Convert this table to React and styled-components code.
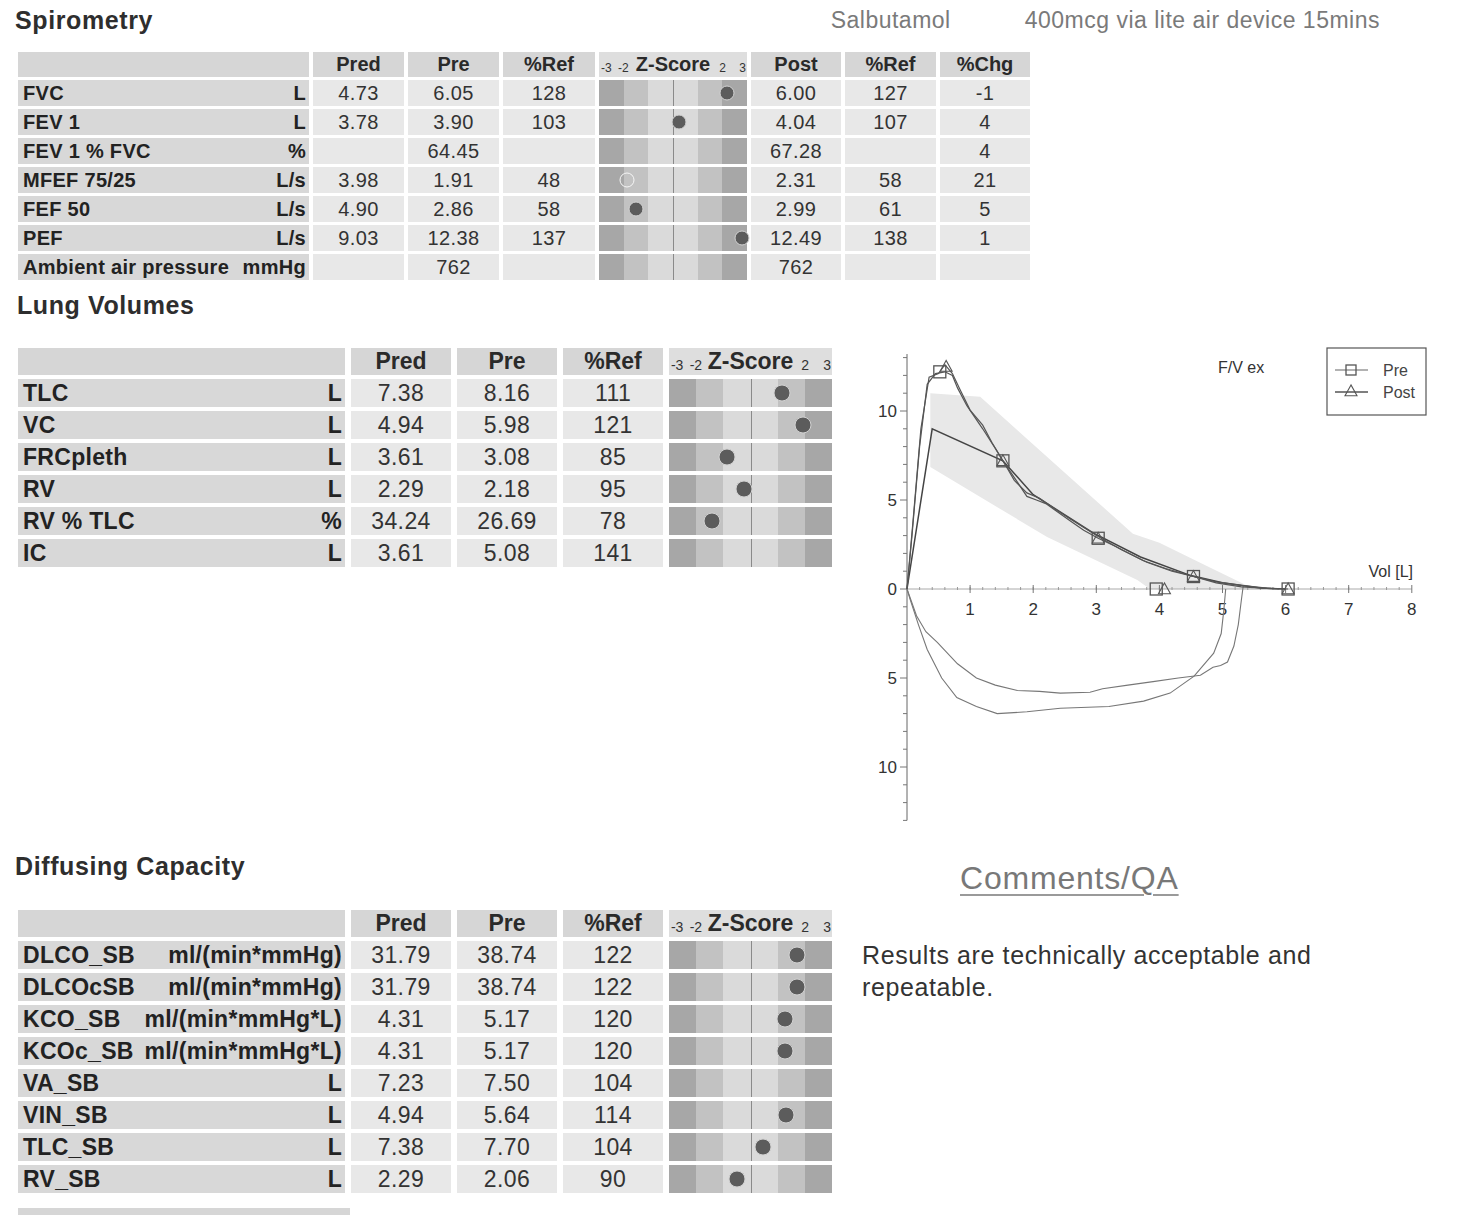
import React from 'react';
import styled, { createGlobalStyle } from 'styled-components';

const GlobalStyle = createGlobalStyle`
  html, body {
    margin: 0;
    padding: 0;
    background: #fff;
  }
  body {
    font-family: "Liberation Sans", Arial, sans-serif;
    color: #2a2a2a;
  }
`;

const Page = styled.div`
  width: 1484px;
  padding: 6px 0 0 15px;
  box-sizing: border-box;
  overflow: hidden;
`;

const TopBar = styled.header`
  display: flex;
  justify-content: space-between;
  align-items: center;
  width: 1365px;
  height: 28px;
`;

const Title = styled.h2`
  margin: ${p => p.$mt || 0}px 0 0 ${p => p.$ml || 0}px;
  font-size: 25px;
  line-height: 28px;
  font-weight: bold;
  letter-spacing: 0.6px;
  color: #2e2e2e;
`;

const Meds = styled.div`
  display: flex;
  gap: 74px;
  font-size: 23px;
  letter-spacing: 0.5px;
  color: #7a7a7a;
`;

const Table = styled.div`
  display: grid;
  grid-template-columns: ${p => p.$cols};
  grid-template-rows: ${p => p.$headH}px;
  grid-auto-rows: ${p => p.$rowH}px;
  column-gap: ${p => p.$colGap}px;
  row-gap: ${p => p.$rowGap}px;
  margin: ${p => p.$mt}px 0 0 3px;
  width: max-content;
  font-size: ${p => p.$fs}px;
`;

const HeadCell = styled.div`
  display: flex;
  align-items: center;
  justify-content: center;
  background: #d6d6d6;
  font-weight: bold;
  color: #2a2a2a;
`;

const LabelCell = styled.div`
  display: flex;
  align-items: center;
  justify-content: space-between;
  padding: 0 3px 0 5px;
  background: #d8d8d8;
  font-weight: bold;
  letter-spacing: 0.3px;
  color: #222;
  white-space: nowrap;
`;

const ValueCell = styled.div`
  display: flex;
  align-items: center;
  justify-content: center;
  background: #e8e8e8;
  letter-spacing: 0.4px;
  color: #333;
`;

const ZCell = styled.div`
  position: relative;
  background: linear-gradient(
    to right,
    #a7a7a7 0 16.66%,
    #c2c2c2 16.66% 33.33%,
    #dadada 33.33% 66.66%,
    #c2c2c2 66.66% 83.33%,
    #a7a7a7 83.33% 100%
  );

  &::after {
    content: '';
    position: absolute;
    left: 50%;
    top: 0;
    bottom: 0;
    width: 1px;
    background: #8a8a8a;
  }
`;

const Dot = styled.span`
  position: absolute;
  top: 50%;
  z-index: 1;
  width: ${p => p.$size}px;
  height: ${p => p.$size}px;
  border-radius: 50%;
  box-sizing: border-box;
  transform: translate(-50%, -50%);
  background: ${p => (p.$hollow ? 'transparent' : '#5c5c5c')};
  border: 1.5px solid ${p => (p.$hollow ? '#f6f6f6' : '#d2d2d2')};
`;

const ZHead = styled.div`
  position: relative;
  display: flex;
  align-items: center;
  justify-content: center;
  background: #dedede;
  font-weight: bold;
  color: #2a2a2a;
`;

const ZTitle = styled.span`
  position: relative;
  z-index: 1;
`;

const ZTick = styled.span`
  position: absolute;
  bottom: 2px;
  transform: translateX(-50%);
  font-size: ${p => p.$fs}px;
  font-weight: normal;
  color: #333;
`;

const Lower = styled.div`
  display: grid;
  grid-template-columns: 845px 580px;
  row-gap: 21px;
  margin-top: 11px;
`;

const Block = styled.section`
  display: flex;
  flex-direction: column;
  align-items: flex-start;
`;

const ChartSvg = styled.svg`
  display: block;
  font-family: "Liberation Sans", Arial, sans-serif;
`;

const CommentsHead = styled.h3`
  margin: 9px 0 0 100px;
  font-size: 32px;
  line-height: 34px;
  font-weight: normal;
  letter-spacing: 0.8px;
  color: #787878;
  text-decoration: underline;
  text-decoration-color: #9a9a9a;
  text-decoration-thickness: 1.5px;
  text-underline-offset: 5px;
`;

const CommentText = styled.p`
  margin: 44px 0 0 2px;
  width: 470px;
  font-size: 25px;
  line-height: 32px;
  letter-spacing: 0.6px;
  color: #333;
`;

const NextHeader = styled.div`
  width: 332px;
  height: 24px;
  margin: 15px 0 0 3px;
  background: #d6d6d6;
`;

const ticks = [
  { v: '-3', at: 5 },
  { v: '-2', at: 16.5 },
  { v: '2', at: 83.5 },
  { v: '3', at: 97 },
];

const spiroRows = [
  { label: 'FVC', unit: 'L', pred: '4.73', pre: '6.05', ref: '128', z: 2.2, post: '6.00', pref: '127', chg: '-1' },
  { label: 'FEV 1', unit: 'L', pred: '3.78', pre: '3.90', ref: '103', z: 0.24, post: '4.04', pref: '107', chg: '4' },
  { label: 'FEV 1 % FVC', unit: '%', pred: '', pre: '64.45', ref: '', z: null, post: '67.28', pref: '', chg: '4' },
  { label: 'MFEF 75/25', unit: 'L/s', pred: '3.98', pre: '1.91', ref: '48', z: -1.88, hollow: true, post: '2.31', pref: '58', chg: '21' },
  { label: 'FEF 50', unit: 'L/s', pred: '4.90', pre: '2.86', ref: '58', z: -1.5, post: '2.99', pref: '61', chg: '5' },
  { label: 'PEF', unit: 'L/s', pred: '9.03', pre: '12.38', ref: '137', z: 2.78, post: '12.49', pref: '138', chg: '1' },
  { label: 'Ambient air pressure', unit: 'mmHg', pred: '', pre: '762', ref: '', z: null, post: '762', pref: '', chg: '' },
];

const lungRows = [
  { label: 'TLC', unit: 'L', pred: '7.38', pre: '8.16', ref: '111', z: 1.16 },
  { label: 'VC', unit: 'L', pred: '4.94', pre: '5.98', ref: '121', z: 1.93 },
  { label: 'FRCpleth', unit: 'L', pred: '3.61', pre: '3.08', ref: '85', z: -0.86 },
  { label: 'RV', unit: 'L', pred: '2.29', pre: '2.18', ref: '95', z: -0.24 },
  { label: 'RV % TLC', unit: '%', pred: '34.24', pre: '26.69', ref: '78', z: -1.42 },
  { label: 'IC', unit: 'L', pred: '3.61', pre: '5.08', ref: '141', z: null },
];

const diffRows = [
  { label: 'DLCO_SB', unit: 'ml/(min*mmHg)', pred: '31.79', pre: '38.74', ref: '122', z: 1.71 },
  { label: 'DLCOcSB', unit: 'ml/(min*mmHg)', pred: '31.79', pre: '38.74', ref: '122', z: 1.71 },
  { label: 'KCO_SB', unit: 'ml/(min*mmHg*L)', pred: '4.31', pre: '5.17', ref: '120', z: 1.27 },
  { label: 'KCOc_SB', unit: 'ml/(min*mmHg*L)', pred: '4.31', pre: '5.17', ref: '120', z: 1.27 },
  { label: 'VA_SB', unit: 'L', pred: '7.23', pre: '7.50', ref: '104', z: null },
  { label: 'VIN_SB', unit: 'L', pred: '4.94', pre: '5.64', ref: '114', z: 1.3 },
  { label: 'TLC_SB', unit: 'L', pred: '7.38', pre: '7.70', ref: '104', z: 0.46 },
  { label: 'RV_SB', unit: 'L', pred: '2.29', pre: '2.06', ref: '90', z: -0.5 },
];

const ZHeader = ({ tickFs }) => (
  <ZHead>
    {ticks.map((t, i) => (
      <ZTick key={i} $fs={tickFs} style={{ left: `${t.at}%` }}>{t.v}</ZTick>
    ))}
    <ZTitle>Z-Score</ZTitle>
  </ZHead>
);

const ZBar = ({ z, hollow, size }) => (
  <ZCell>
    {z !== null && z !== undefined && (
      <Dot $size={size} $hollow={hollow} style={{ left: `${((z + 3) / 6) * 100}%` }} />
    )}
  </ZCell>
);

const SpiroTable = () => (
  <Table
    $cols="291px 91px 91px 92px 148px 90px 91px 90px"
    $headH={25}
    $rowH={26}
    $colGap={4}
    $rowGap={3}
    $mt={18}
    $fs={20}
  >
    <HeadCell />
    <HeadCell>Pred</HeadCell>
    <HeadCell>Pre</HeadCell>
    <HeadCell>%Ref</HeadCell>
    <ZHeader tickFs={12} />
    <HeadCell>Post</HeadCell>
    <HeadCell>%Ref</HeadCell>
    <HeadCell>%Chg</HeadCell>
    {spiroRows.map(r => (
      <React.Fragment key={r.label}>
        <LabelCell>
          <span>{r.label}</span>
          <span>{r.unit}</span>
        </LabelCell>
        <ValueCell>{r.pred}</ValueCell>
        <ValueCell>{r.pre}</ValueCell>
        <ValueCell>{r.ref}</ValueCell>
        <ZBar z={r.z} hollow={r.hollow} size={15} />
        <ValueCell>{r.post}</ValueCell>
        <ValueCell>{r.pref}</ValueCell>
        <ValueCell>{r.chg}</ValueCell>
      </React.Fragment>
    ))}
  </Table>
);

const BigTable = ({ rows, mt }) => (
  <Table
    $cols="327px 100px 100px 100px 163px"
    $headH={27}
    $rowH={28}
    $colGap={6}
    $rowGap={4}
    $mt={mt}
    $fs={23}
  >
    <HeadCell />
    <HeadCell>Pred</HeadCell>
    <HeadCell>Pre</HeadCell>
    <HeadCell>%Ref</HeadCell>
    <ZHeader tickFs={14} />
    {rows.map(r => (
      <React.Fragment key={r.label}>
        <LabelCell>
          <span>{r.label}</span>
          <span>{r.unit}</span>
        </LabelCell>
        <ValueCell>{r.pred}</ValueCell>
        <ValueCell>{r.pre}</ValueCell>
        <ValueCell>{r.ref}</ValueCell>
        <ZBar z={r.z} size={17} />
      </React.Fragment>
    ))}
  </Table>
);

// flow / volume loop, origin of the axes sits at (47, 298) in the svg
const ox = 47;
const oy = 298;
const X = v => ox + v * 63.1;
const Y = v => oy - v * 17.8;
const pts = arr => arr.map(([x, y]) => `${X(x).toFixed(1)},${Y(y).toFixed(1)}`).join(' ');

const band = [
  [0.37, 11.0], [1.16, 10.8], [3.58, 3.1], [4.0, 2.6], [4.8, 1.2], [5.5, 0],
  [3.85, 0], [3.65, 0.5], [2.22, 2.92], [0.37, 6.85],
];

const predLine = [[0, 0], [0.4, 9.0], [1.52, 7.2], [2.0, 5.3], [2.95, 3.15], [3.7, 1.8], [4.5, 0.75], [5.0, 0.35], [5.6, 0.05], [6.0, 0]];

const preExp = [
  [0, 0], [0.08, 3], [0.2, 8], [0.32, 11.5], [0.45, 12.1], [0.6, 12.2], [0.72, 12.0], [0.8, 11.3],
  [0.95, 10.3], [1.2, 9.0], [1.4, 7.9], [1.52, 7.2], [1.75, 6.0], [1.9, 5.2], [2.05, 5.0], [2.2, 4.8],
  [2.4, 4.3], [2.6, 3.8], [2.8, 3.3], [3.03, 2.85], [3.3, 2.4], [3.74, 1.6], [4.1, 1.15], [4.54, 0.7],
  [4.9, 0.4], [5.3, 0.2], [5.7, 0.05], [6.04, 0],
];

const postExp = [
  [0, 0], [0.1, 4], [0.22, 9], [0.35, 11.9], [0.5, 12.1], [0.6, 12.6], [0.72, 12.1], [0.84, 11.2],
  [1.0, 10.05], [1.2, 9.2], [1.35, 8.2], [1.52, 7.2], [1.7, 6.1], [1.9, 5.4], [2.1, 5.1], [2.3, 4.6],
  [2.6, 3.9], [3.03, 2.95], [3.4, 2.2], [3.8, 1.5], [4.2, 1.0], [4.54, 0.7], [4.9, 0.35], [5.3, 0.12], [5.9, 0],
];

const inspA = [
  [0, 0], [0.15, -1.5], [0.3, -2.4], [0.48, -3.0], [0.8, -4.2], [1.1, -5.0], [1.4, -5.4], [1.75, -5.7],
  [2.1, -5.75], [2.43, -5.85], [2.9, -5.8], [3.1, -5.6], [3.5, -5.4], [3.9, -5.2], [4.3, -5.0],
  [4.65, -4.85], [4.85, -4.4], [4.97, -4.3], [5.08, -4.1], [5.18, -3.2], [5.25, -2.0], [5.3, -0.6], [5.33, 0.2],
];

const inspB = [
  [0, 0], [0.05, -0.6], [0.18, -2.0], [0.32, -3.4], [0.55, -5.0], [0.79, -6.1], [1.1, -6.6], [1.43, -7.0],
  [1.9, -6.9], [2.43, -6.7], [3.2, -6.6], [3.75, -6.3], [4.17, -5.85], [4.55, -4.9], [4.86, -3.6],
  [4.98, -2.5], [5.02, -1.2], [5.05, 0],
];

const squares = [[0.52, 12.2], [1.52, 7.2], [3.03, 2.85], [4.54, 0.7], [6.04, 0], [3.95, 0]];
const triangles = [[0.62, 12.5], [1.52, 7.2], [3.03, 2.85], [4.54, 0.7], [6.04, 0], [4.08, 0]];

const Square = ({ cx, cy, size = 12 }) => (
  <rect x={cx - size / 2} y={cy - size / 2} width={size} height={size} fill="none" stroke="#555" strokeWidth="1.3" />
);

const Triangle = ({ cx, cy, size = 6 }) => (
  <polygon
    points={`${cx},${cy - size} ${cx - size},${cy + size * 0.8} ${cx + size},${cy + size * 0.8}`}
    fill="none"
    stroke="#555"
    strokeWidth="1.1"
  />
);

const FlowVolumeChart = () => {
  const yTicks = [];
  for (let v = -13; v <= 13; v++) yTicks.push(v);
  const xMinor = [];
  for (let v = 0.2; v < 8; v += 0.2) xMinor.push(v);

  return (
    <ChartSvg width="580" height="540" viewBox="0 0 580 540">
      <polygon points={pts(band)} fill="#e8e8e8" />

      {/* y axis */}
      <line x1={ox} y1={Y(13.2)} x2={ox} y2={Y(-13)} stroke="#666" strokeWidth="1" />
      {yTicks.map(v => (
        <line key={v} x1={ox - (v % 5 === 0 ? 7 : 4)} y1={Y(v)} x2={ox} y2={Y(v)} stroke="#777" strokeWidth="1" />
      ))}
      {[10, 5, 0, -5, -10].map(v => (
        <text key={v} x={ox - 10} y={Y(v) + 6} fontSize="17" textAnchor="end" fill="#333">
          {Math.abs(v)}
        </text>
      ))}

      {/* x axis */}
      <line x1={X(0)} y1={Y(0)} x2={X(8)} y2={Y(0)} stroke="#aaa" strokeWidth="1" />
      {xMinor.map((v, i) => (
        <line key={i} x1={X(v)} y1={Y(0) - 2} x2={X(v)} y2={Y(0) + 1} stroke="#999" strokeWidth="1" />
      ))}
      {[1, 2, 3, 4, 5, 6, 7, 8].map(v => (
        <g key={v}>
          <line x1={X(v)} y1={Y(0) - 4} x2={X(v)} y2={Y(0) + 4} stroke="#777" strokeWidth="1" />
          <text x={X(v)} y={Y(0) + 26} fontSize="17" textAnchor="middle" fill="#333">{v}</text>
        </g>
      ))}

      {/* loops */}
      <polyline points={pts(inspA)} fill="none" stroke="#777" strokeWidth="1.1" />
      <polyline points={pts(inspB)} fill="none" stroke="#777" strokeWidth="1.1" />
      <polyline points={pts(predLine)} fill="none" stroke="#444" strokeWidth="1.5" />
      <polyline points={pts(preExp)} fill="none" stroke="#555" strokeWidth="1.2" />
      <polyline points={pts(postExp)} fill="none" stroke="#555" strokeWidth="1.2" />

      {squares.map(([x, y], i) => <Square key={i} cx={X(x)} cy={Y(y)} />)}
      {triangles.map(([x, y], i) => <Triangle key={i} cx={X(x)} cy={Y(y)} />)}

      <text x="358" y="82" fontSize="16" fill="#333">F/V ex</text>
      <text x="553" y="286" fontSize="16" textAnchor="end" fill="#333">Vol [L]</text>

      {/* legend */}
      <rect x="467" y="57" width="99" height="67" fill="#fff" stroke="#555" strokeWidth="1.2" />
      <line x1="475" y1="79" x2="508" y2="79" stroke="#666" strokeWidth="1.1" />
      <Square cx={491} cy={79} size={10} />
      <text x="523" y="85" fontSize="16" fill="#444">Pre</text>
      <line x1="475" y1="101" x2="508" y2="101" stroke="#555" strokeWidth="1.3" />
      <Triangle cx={491} cy={100} size={6} />
      <text x="523" y="107" fontSize="16" fill="#444">Post</text>
    </ChartSvg>
  );
};

const App = () => (
  <Page>
    <GlobalStyle />
    <TopBar>
      <Title>Spirometry</Title>
      <Meds>
        <span>Salbutamol</span>
        <span>400mcg via lite air device 15mins</span>
      </Meds>
    </TopBar>

    <SpiroTable />

    <Lower>
      <Block>
        <Title $ml={2}>Lung Volumes</Title>
        <BigTable rows={lungRows} mt={29} />
      </Block>
      <FlowVolumeChart />

      <Block>
        <Title>Diffusing Capacity</Title>
        <BigTable rows={diffRows} mt={30} />
        <NextHeader />
      </Block>
      <Block>
        <CommentsHead>Comments/QA</CommentsHead>
        <CommentText>Results are technically acceptable and repeatable.</CommentText>
      </Block>
    </Lower>
  </Page>
);

export default App;
